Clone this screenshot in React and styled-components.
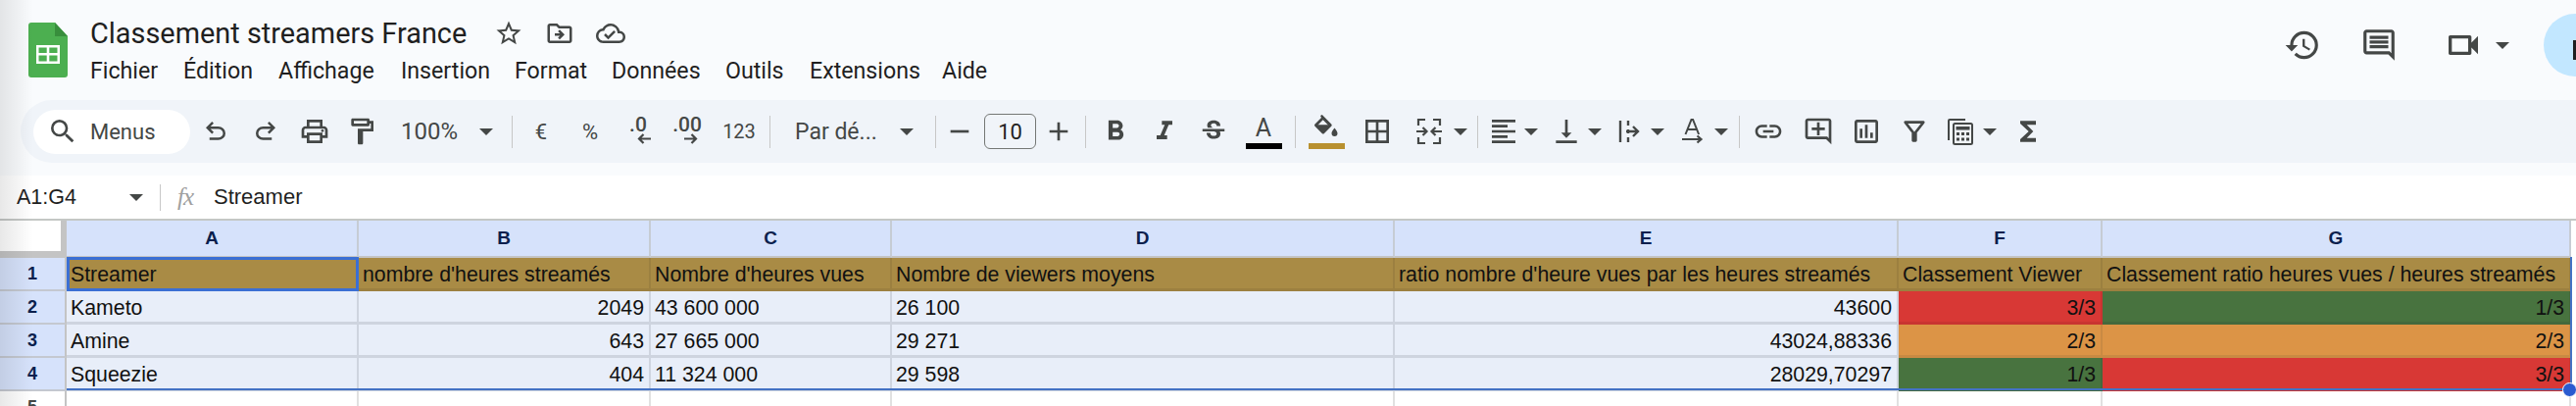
import React from "react"
import styled, { createGlobalStyle } from "styled-components"
import {
  MdStarBorder, MdOutlineDriveFileMove, MdOutlineCloudDone, MdHistory, MdOutlineComment, MdOutlineVideocam,
  MdSearch, MdOutlineLocalPrintshop, MdOutlineFormatPaint, MdRemove, MdAdd, MdFormatBold,
  MdFormatItalic, MdStrikethroughS, MdBorderAll, MdFormatAlignLeft, MdVerticalAlignBottom, MdLink,
  MdOutlineAddComment, MdOutlineInsertChart, MdFunctions, MdOutlineFilterAlt,
} from "react-icons/md"

const ink = "#444746"

const GlobalStyle = createGlobalStyle`
  html, body { margin: 0; padding: 0; background: #fff; overflow: hidden; }
  body { font-family: "Liberation Sans", Arial, sans-serif; }
`

const Page = styled.div`
  position: relative;
  width: 2628px;
  height: 414px;
  overflow: hidden;
  display: flex;
  flex-direction: column;
`

const LeftShade = styled.div`
  position: absolute;
  left: 0;
  top: 0;
  bottom: 0;
  width: 34px;
  background: linear-gradient(to right, rgba(0, 0, 0, 0.09), rgba(0, 0, 0, 0));
  pointer-events: none;
  z-index: 5;
`

const Chrome = styled.div`
  background: #f9fbfd;
  height: 179px;
  flex: none;
`

const TitleBar = styled.div`
  height: 102px;
  display: flex;
  padding-left: 29px;
  box-sizing: border-box;
`

const Logo = styled.svg`
  width: 40px;
  height: 56px;
  margin-top: 23px;
  flex: none;
`

const TitleBlock = styled.div`
  margin-left: 23px;
  flex: 1;
  min-width: 0;
`

const TitleRow = styled.div`
  height: 58px;
  display: flex;
  align-items: center;
  padding-top: 10px;
  box-sizing: border-box;
`

const DocTitle = styled.div`
  font-family: Roboto, sans-serif;
  font-size: 28.9px;
  color: #1f1f1f;
  white-space: nowrap;
`

const TitleIcons = styled.div`
  display: flex;
  align-items: center;
  gap: 22px;
  margin-left: 28px;
  color: ${ink};
  font-size: 30px;
  svg { display: block; }
`

const MenuRow = styled.div`
  display: flex;
  font-family: Roboto, sans-serif;
  font-size: 23.2px;
  color: #1f1f1f;
`

const MenuItem = styled.span`
  width: ${(p) => p.$w}px;
  flex: none;
`

const RightActions = styled.div`
  width: 320px;
  flex: none;
  display: flex;
  align-items: center;
  align-self: flex-start;
  height: 64px;
  margin-top: 14px;
  color: ${ink};
  overflow: hidden;
`

const ActionIcon = styled.div`
  width: ${(p) => p.$w}px;
  margin-left: ${(p) => p.$ml || 0}px;
  height: 64px;
  flex: none;
  display: flex;
  align-items: center;
  justify-content: center;
  font-size: ${(p) => p.$size || 38}px;
`

const ShareButton = styled.div`
  width: 90px;
  height: 64px;
  border-radius: 32px;
  background: #c2e7ff;
  flex: none;
  margin-left: 35px;
  position: relative;
`

const ShareGlyph = styled.div`
  position: absolute;
  left: 30px;
  top: 27px;
  width: 8px;
  height: 20px;
  background: #1f1f1f;
`

const Toolbar = styled.div`
  margin-left: 21px;
  height: 64px;
  background: #f0f4f9;
  border-radius: 32px 0 0 32px;
  display: flex;
  align-items: center;
  padding-left: 13px;
  color: ${ink};
`

const SearchPill = styled.div`
  width: 160px;
  height: 45px;
  border-radius: 23px;
  background: #fff;
  display: flex;
  align-items: center;
  padding-left: 14px;
  box-sizing: border-box;
  font-family: Roboto, sans-serif;
  font-size: 22px;
  flex: none;
  svg { font-size: 32px; margin-right: 12px; flex: none; }
`

const Slot = styled.div`
  width: ${(p) => p.$w}px;
  height: 44px;
  flex: none;
  display: flex;
  align-items: center;
  justify-content: center;
  font-size: ${(p) => p.$size || 32}px;
  font-family: Roboto, sans-serif;
  position: relative;
`

const SplitSlot = styled.div`
  width: ${(p) => p.$w}px;
  padding-left: ${(p) => p.$pl}px;
  box-sizing: border-box;
  height: 44px;
  flex: none;
  display: flex;
  align-items: center;
  font-family: Roboto, sans-serif;
`

const IconBox = styled.div`
  width: ${(p) => p.$w}px;
  margin-right: ${(p) => p.$gap}px;
  flex: none;
  display: flex;
  align-items: center;
  justify-content: center;
  font-size: 32px;
  svg { flex: none; }
`

const SplitLabel = styled.span`
  width: ${(p) => p.$w}px;
  flex: none;
  font-size: ${(p) => p.$size || 23}px;
  white-space: nowrap;
`

const Caret = styled.span`
  flex: none;
  width: 0;
  height: 0;
  border-left: 7px solid transparent;
  border-right: 7px solid transparent;
  border-top: 7px solid ${ink};
`

const Sep = styled.div`
  width: 1px;
  height: 33px;
  flex: none;
  background: #c7c7c7;
  margin-left: ${(p) => p.$ml || 0}px;
`

const SizeBox = styled.div`
  width: 53px;
  height: 36px;
  border: 1.5px solid #747775;
  border-radius: 6px;
  box-sizing: border-box;
  display: flex;
  align-items: center;
  justify-content: center;
  color: #1f1f1f;
  font-size: 22px;
`

const SmallNum = styled.span`
  font-size: ${(p) => p.$size || 21}px;
  color: ${ink};
`

const ColorStack = styled.div`
  display: flex;
  flex-direction: column;
  align-items: center;
  width: 37px;
  font-size: 25px;
  line-height: 27px;
  color: ${ink};
`

const ColorBar = styled.div`
  width: 37px;
  height: 6px;
  background: ${(p) => p.$color};
  margin-top: 2px;
`

const DecimalWrap = styled.div`
  display: flex;
  flex-direction: column;
  align-items: center;
  line-height: 20px;
  font-size: 21px;
  font-weight: 500;
  margin-top: -4px;
  svg { display: block; margin: -1px 0 0 ${(p) => p.$shift}px; }
`

const FormulaBar = styled.div`
  height: 44px;
  flex: none;
  background: #fff;
  display: flex;
  align-items: center;
  color: #1f1f1f;
  font-family: "Liberation Sans", Arial, sans-serif;
  font-size: 22px;
`

const NameBox = styled.div`
  width: 163px;
  flex: none;
  padding: 0 17px;
  box-sizing: border-box;
  display: flex;
  align-items: center;
  justify-content: space-between;
  font-size: 21.5px;
`

const FxSep = styled.div`
  width: 1px;
  height: 27px;
  background: #c7c7c7;
  flex: none;
`

const Fx = styled.span`
  font-family: "Liberation Serif", serif;
  font-style: italic;
  font-size: 25px;
  color: #a0a0a0;
  margin-left: 17px;
  width: 37px;
  flex: none;
  letter-spacing: -1px;
`

const Sheet = styled.div`
  position: relative;
  flex: 1;
  display: grid;
  grid-template-columns: 68px 298px 298px 246px 513px 514px 208px 478px 5px;
  grid-template-rows: 38px 34px 34px 34px 34px 34px;
  border-top: 2px solid #c4c7c5;
`

const Corner = styled.div`
  background: #fff;
  box-shadow: inset -6px -7px 0 #c4c4c4;
`

const ColHead = styled.div`
  background: #d6e2fb;
  border-right: 2px solid #c6ccd4;
  border-bottom: 2px solid #c4c4c4;
  box-sizing: border-box;
  display: flex;
  align-items: center;
  justify-content: center;
  font-size: 19px;
  font-weight: 700;
  color: #0b1f4d;
`

const RowHead = styled.div`
  background: ${(p) => (p.$plain ? "#fff" : "#d6e2fb")};
  border-right: 2px solid #c4c4c4;
  border-bottom: 2px solid #c4c8d0;
  box-sizing: border-box;
  display: flex;
  align-items: center;
  justify-content: center;
  font-size: 18px;
  font-weight: 700;
  color: ${(p) => (p.$plain ? "#444746" : "#0b1f4d")};
`

const Cell = styled.div`
  background: ${(p) => p.$bg || "#e8eef9"};
  border-right: 2px solid ${(p) => p.$line || "#ced4df"};
  border-bottom: 3px solid ${(p) => p.$line || "#ced4df"};
  box-sizing: border-box;
  padding: 3px 5px 0 4px;
  display: flex;
  align-items: center;
  justify-content: ${(p) => (p.$right ? "flex-end" : "flex-start")};
  font-size: 21.3px;
  color: #111;
  white-space: nowrap;
  overflow: hidden;
`

const EmptyCell = styled.div`
  background: #fff;
  border-right: 2px solid #e1e1e1;
  box-sizing: border-box;
`

const RangeBox = styled.div`
  position: absolute;
  left: 68px;
  top: 37px;
  width: 2556px;
  height: 136px;
  border-style: solid;
  border-color: #4472c4;
  border-width: 0 2px 2px 0;
  box-sizing: border-box;
  pointer-events: none;
`

const ActiveBox = styled.div`
  position: absolute;
  left: 68px;
  top: 37px;
  width: 298px;
  height: 35px;
  border: 3px solid #3b6fd4;
  box-sizing: border-box;
  pointer-events: none;
`

const Handle = styled.div`
  position: absolute;
  left: 2614px;
  top: 165px;
  width: 15px;
  height: 15px;
  border-radius: 50%;
  background: #2a5bd0;
  border: 1px solid #fff;
  box-sizing: border-box;
`

const SheetIcon = () => (
  <Logo viewBox="0 0 40 56">
    <path d="M3 0h24l13 14v39a3 3 0 0 1-3 3H3a3 3 0 0 1-3-3V3a3 3 0 0 1 3-3z" fill="#4caf50" />
    <path d="M27 0l13 14H27z" fill="#388e3c" />
    <path d="M8 23h24v19H8z M10.5 25.5v5.5h8.2v-5.5z M21.3 25.5v5.5h8.2v-5.5z M10.5 33.5v6h8.2v-6z M21.3 33.5v6h8.2v-6z" fill="#fff" fillRule="evenodd" />
  </Logo>
)

const undoPath = "M7 19v-2h7.1q1.575 0 2.738-1T18 13.5t-1.162-2.5T14.1 10H7.8l2.6 2.6L9 14 4 9l5-5 1.4 1.4L7.8 8h6.3q2.425 0 4.163 1.575T20 13.5t-1.737 3.925T14.1 19z"

const UndoIcon = ({ flip }) => (
  <svg width="30" height="30" viewBox="0 0 24 24" fill={ink} style={flip ? { transform: "scaleX(-1)" } : undefined}>
    <path d={undoPath} />
  </svg>
)

const MergeIcon = () => (
  <svg width="26" height="26" viewBox="0 0 26 26" fill="none" stroke={ink} strokeWidth="2.2">
    <path d="M9 1H2v6 M2 19v6h7 M17 1h7v6 M24 19v6h-7" />
    <path d="M0 13h10 M6.5 9l4 4-4 4 M26 13H16 M19.5 9l-4 4 4 4" />
  </svg>
)

const WrapIcon = () => (
  <svg width="22" height="26" viewBox="0 0 22 26" fill="none" stroke={ink} strokeWidth="2.4">
    <path d="M2 2v22" />
    <path d="M10 2v5 M10 11v4 M10 19v5" />
    <path d="M8 13h12 M15 8l5 5-5 5" />
  </svg>
)

const RotateIcon = () => (
  <svg width="22" height="26" viewBox="0 0 22 26" fill="none" stroke={ink}>
    <path d="M3.5 16L9.5 1h1.6l6 15 M6 11h9" strokeWidth="2" />
    <path d="M0 21h19 M15.5 17.5l4 3.5-4 3.5" strokeWidth="2.2" />
  </svg>
)

const FillIcon = () => (
  <svg width="30" height="27" viewBox="0 0 30 27">
    <path d="M9 1l1.8-1 9.4 9.4a1.6 1.6 0 0 1 0 2.3l-7.2 7.2a1.6 1.6 0 0 1-2.3 0L3.5 11.7a1.6 1.6 0 0 1 0-2.3L10 3z M11.7 5.2L6.5 10.4h10.4z" fill={ink} fillRule="evenodd" />
    <path d="M23.5 13.5s3 3.4 3 5.4a3 3 0 0 1-6 0c0-2 3-5.4 3-5.4z" fill={ink} />
    <path d="M6.5 10.4h10.4l-5.2 5.2z" fill={ink} />
  </svg>
)

const CalcIcon = () => (
  <svg width="26" height="27" viewBox="0 0 26 27" fill="none">
    <path d="M1 22V2a1 1 0 0 1 1-1h16" stroke={ink} strokeWidth="2" />
    <rect x="6" y="5" width="19" height="21" rx="1.5" stroke={ink} strokeWidth="2" />
    <rect x="8.5" y="8" width="14" height="3.5" fill={ink} />
    <path d="M9 14h3v3H9z M14 14h3v3h-3z M19 14h3v3h-3z M9 19.5h3v3H9z M14 19.5h3v3h-3z M19 19.5h3v3h-3z" fill={ink} />
  </svg>
)

const ArrowLeft = () => (
  <svg width="14" height="11" viewBox="0 0 14 11" fill="none" stroke={ink} strokeWidth="2.2">
    <path d="M14 5.5H2 M6.5 1L2 5.5 6.5 10" />
  </svg>
)

const ArrowRight = () => (
  <svg width="14" height="11" viewBox="0 0 14 11" fill="none" stroke={ink} strokeWidth="2.2">
    <path d="M0 5.5h12 M7.5 1L12 5.5 7.5 10" />
  </svg>
)

const menus = [
  ["Fichier", 95], ["Édition", 97], ["Affichage", 125], ["Insertion", 116], ["Format", 99],
  ["Données", 116], ["Outils", 86], ["Extensions", 135], ["Aide", 60],
]

const columns = ["A", "B", "C", "D", "E", "F", "G"]

const headers = [
  "Streamer", "nombre d'heures streamés", "Nombre d'heures vues", "Nombre de viewers moyens",
  "ratio nombre d'heure vues par les heures streamés", "Classement Viewer",
  "Classement ratio heures vues / heures streamés",
]

const red = "#d83835"
const orange = "#dc9446"
const green = "#48733f"

const rows = [
  { name: "Kameto", hours: "2049", views: "43 600 000", avg: "26 100", ratio: "43600", viewer: "3/3", viewerBg: red, rank: "1/3", rankBg: green },
  { name: "Amine", hours: "643", views: "27 665 000", avg: "29 271", ratio: "43024,88336", viewer: "2/3", viewerBg: orange, rank: "2/3", rankBg: orange },
  { name: "Squeezie", hours: "404", views: "11 324 000", avg: "29 598", ratio: "28029,70297", viewer: "1/3", viewerBg: green, rank: "3/3", rankBg: red },
]

const lineFor = { [red]: "#c93431", [orange]: "#c98a43", [green]: "#44693c" }

export default function App() {
  return (
    <Page>
      <GlobalStyle />
      <LeftShade />
      <Chrome>
        <TitleBar>
          <SheetIcon />
          <TitleBlock>
            <TitleRow>
              <DocTitle>Classement streamers France</DocTitle>
              <TitleIcons>
                <MdStarBorder />
                <MdOutlineDriveFileMove />
                <MdOutlineCloudDone />
              </TitleIcons>
            </TitleRow>
            <MenuRow>
              {menus.map(([label, w]) => (
                <MenuItem key={label} $w={w}>{label}</MenuItem>
              ))}
            </MenuRow>
          </TitleBlock>
          <RightActions>
            <ActionIcon $w={82}><MdHistory /></ActionIcon>
            <ActionIcon $w={74}><MdOutlineComment /></ActionIcon>
            <ActionIcon $w={66} $ml={16} $size={40}><MdOutlineVideocam /></ActionIcon>
            <Caret />
            <ShareButton><ShareGlyph /></ShareButton>
          </RightActions>
        </TitleBar>
        <Toolbar>
          <SearchPill><MdSearch />Menus</SearchPill>
          <Slot $w={52}><UndoIcon /></Slot>
          <Slot $w={50}><UndoIcon flip /></Slot>
          <Slot $w={49}><MdOutlineLocalPrintshop /></Slot>
          <Slot $w={48}><MdOutlineFormatPaint /></Slot>
          <SplitSlot $w={129} $pl={16}>
            <SplitLabel $w={80} $size={24}>100%</SplitLabel>
            <Caret />
          </SplitSlot>
          <Sep />
          <Slot $w={58}><SmallNum $size={22}>€</SmallNum></Slot>
          <Slot $w={42}><SmallNum $size={22}>%</SmallNum></Slot>
          <Slot $w={56}>
            <DecimalWrap $shift={12}>
              <SmallNum>.0</SmallNum>
              <ArrowLeft />
            </DecimalWrap>
          </Slot>
          <Slot $w={44}>
            <DecimalWrap $shift={8}>
              <SmallNum>.00</SmallNum>
              <ArrowRight />
            </DecimalWrap>
          </Slot>
          <Slot $w={62}><SmallNum $size={20}>123</SmallNum></Slot>
          <Sep />
          <SplitSlot $w={168} $pl={25}>
            <SplitLabel $w={107}>Par dé...</SplitLabel>
            <Caret />
          </SplitSlot>
          <Sep />
          <Slot $w={48}><MdRemove /></Slot>
          <Slot $w={55}><SizeBox>10</SizeBox></Slot>
          <Slot $w={44}><MdAdd /></Slot>
          <Sep $ml={5} />
          <Slot $w={60} $size={34}><MdFormatBold /></Slot>
          <Slot $w={40} $size={32}><MdFormatItalic /></Slot>
          <Slot $w={60} $size={30}><MdStrikethroughS /></Slot>
          <Slot $w={42}>
            <ColorStack>A<ColorBar $color="#000" /></ColorStack>
          </Slot>
          <Sep $ml={11} />
          <Slot $w={62}>
            <ColorStack><FillIcon /><ColorBar $color="#b8902f" /></ColorStack>
          </Slot>
          <Slot $w={42}><MdBorderAll /></Slot>
          <SplitSlot $w={81} $pl={20}>
            <IconBox $w={24} $gap={13}><MergeIcon /></IconBox>
            <Caret />
          </SplitSlot>
          <Sep />
          <SplitSlot $w={68} $pl={14}>
            <IconBox $w={23} $gap={10}><MdFormatAlignLeft /></IconBox>
            <Caret />
          </SplitSlot>
          <SplitSlot $w={66} $pl={12}>
            <IconBox $w={20} $gap={12}><MdVerticalAlignBottom /></IconBox>
            <Caret />
          </SplitSlot>
          <SplitSlot $w={65} $pl={10}>
            <IconBox $w={20} $gap={12}><WrapIcon /></IconBox>
            <Caret />
          </SplitSlot>
          <SplitSlot $w={67} $pl={10}>
            <IconBox $w={20} $gap={12}><RotateIcon /></IconBox>
            <Caret />
          </SplitSlot>
          <Sep />
          <Slot $w={58}><MdLink /></Slot>
          <Slot $w={44}><MdOutlineAddComment /></Slot>
          <Slot $w={54}><MdOutlineInsertChart /></Slot>
          <Slot $w={44}><MdOutlineFilterAlt /></Slot>
          <SplitSlot $w={71} $pl={12}>
            <IconBox $w={26} $gap={10}><CalcIcon /></IconBox>
            <Caret />
          </SplitSlot>
          <Slot $w={46}><MdFunctions /></Slot>
        </Toolbar>
      </Chrome>
      <FormulaBar>
        <NameBox>A1:G4<Caret /></NameBox>
        <FxSep />
        <Fx>fx</Fx>
        Streamer
      </FormulaBar>
      <Sheet>
        <Corner />
        {columns.map((c) => <ColHead key={c}>{c}</ColHead>)}
        <div />
        <RowHead>1</RowHead>
        {headers.map((h) => <Cell key={h} $bg="#a98b45" $line="#9c8040">{h}</Cell>)}
        <div />
        {rows.map((r, i) => (
          <React.Fragment key={r.name}>
            <RowHead>{i + 2}</RowHead>
            <Cell>{r.name}</Cell>
            <Cell $right>{r.hours}</Cell>
            <Cell>{r.views}</Cell>
            <Cell>{r.avg}</Cell>
            <Cell $right>{r.ratio}</Cell>
            <Cell $right $bg={r.viewerBg} $line={lineFor[r.viewerBg]}>{r.viewer}</Cell>
            <Cell $right $bg={r.rankBg} $line={lineFor[r.rankBg]}>{r.rank}</Cell>
            <div />
          </React.Fragment>
        ))}
        <RowHead $plain>5</RowHead>
        {columns.map((c) => <EmptyCell key={c} />)}
        <div />
        <RangeBox />
        <ActiveBox />
        <Handle />
      </Sheet>
    </Page>
  )
}
